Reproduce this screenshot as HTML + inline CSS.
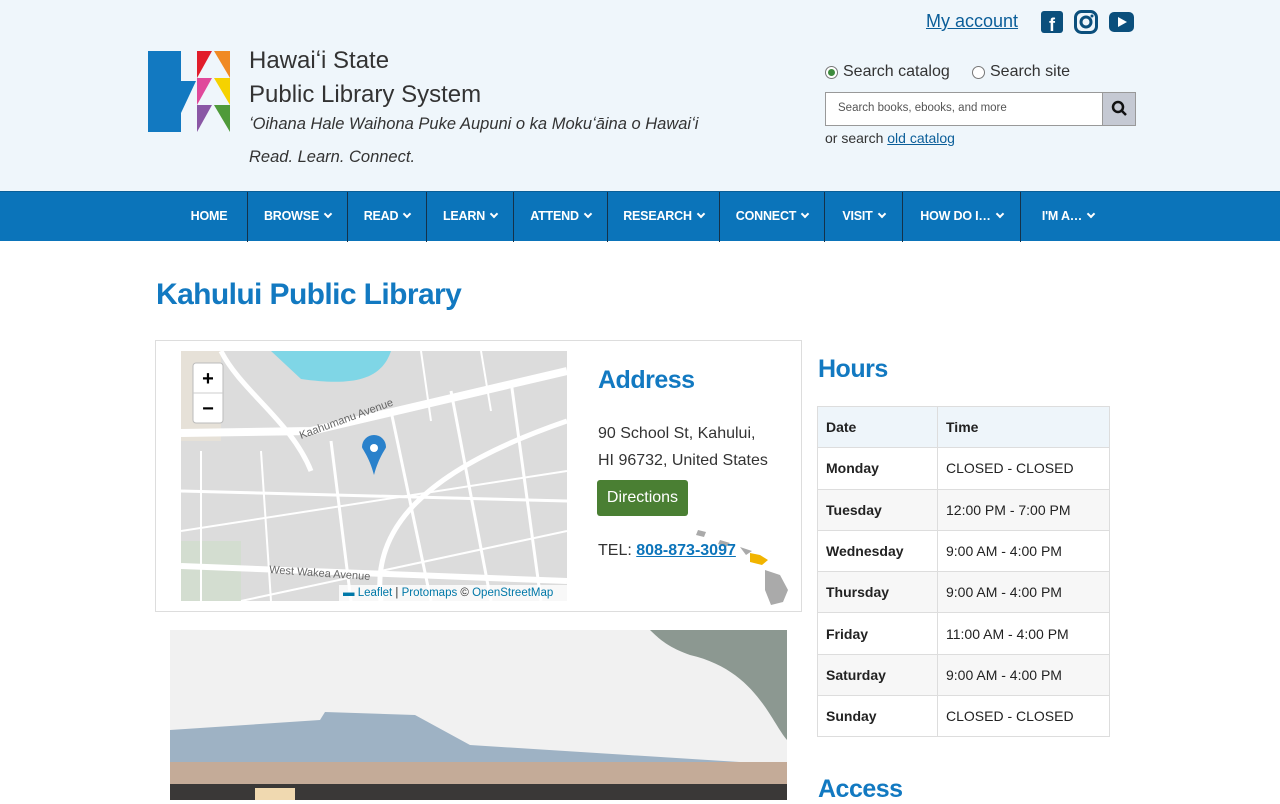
<!DOCTYPE html>
<html><head><meta charset="utf-8"><style>
*{box-sizing:border-box;margin:0;padding:0}
body{width:1280px;height:800px;overflow:hidden;background:#fff;font-family:"Liberation Sans",sans-serif;color:#222}
.hdr{position:absolute;left:0;top:0;width:1280px;height:191px;background:#eff6fb}
.nav{position:absolute;left:0;top:191px;width:1280px;height:50px;background:#0b74ba;border-top:1px solid #0a5f98}
.nav div{position:absolute;top:0;height:50px;line-height:48px;color:#fff;font-weight:bold;font-size:12.5px;text-align:center;border-left:1px solid #14324a;letter-spacing:-0.2px}
.nav div:first-child{border-left:none}
.chev{display:inline-block;width:6px;height:6px;border-right:2px solid #fff;border-bottom:2px solid #fff;transform:rotate(45deg);margin-left:6px;position:relative;top:-3px}
a{color:#0b5e99}
.t{position:absolute;white-space:nowrap}
table{border-collapse:collapse;position:absolute;left:817px;top:406px;width:293px;font-size:14px}
td{border:1px solid #ddd;height:41.3px;padding:0 8px}
td:first-child{width:120px;font-weight:bold}
tr:nth-child(odd){background:#f7f7f7}
tr:first-child{background:#eef5fa;font-weight:bold}
</style></head><body>
<div class="hdr">
<svg style="position:absolute;left:148px;top:51px" width="82" height="82" viewBox="0 0 82 82">
<polygon points="0,0 33,0 33,30 48,30 33,62 33,81 0,81" fill="#1279c1"/>
<polygon points="49,0 64,0 49,27" fill="#e11d2b"/>
<polygon points="66,0 82,0 82,27" fill="#f08a24"/>
<polygon points="49,27 64,27 49,54" fill="#e0499b"/>
<polygon points="66,27 82,27 82,54" fill="#f5d200"/>
<polygon points="49,54 64,54 49,81" fill="#8a57a5"/>
<polygon points="66,54 82,54 82,81" fill="#4f9a3a"/>
</svg>
<div class="t" style="left:249px;top:47px;font-size:24px;color:#333">Hawaiʻi State</div>
<div class="t" style="left:249px;top:81px;font-size:24px;color:#333">Public Library System</div>
<div class="t" style="left:249px;top:115px;font-size:16.5px;font-style:italic;color:#333">ʻOihana Hale Waihona Puke Aupuni o ka Mokuʻāina o Hawaiʻi</div>
<div class="t" style="left:249px;top:148px;font-size:16.5px;font-style:italic;color:#333">Read. Learn. Connect.</div>
<div class="t" style="left:926px;top:11px;font-size:18px"><a href="#">My account</a></div>
<svg style="position:absolute;left:1041px;top:11px" width="22" height="22"><rect width="22" height="22" rx="3" fill="#0b4f7c"/><text x="8" y="20" fill="#fff" font-size="18" font-weight="bold" font-family="Liberation Sans">f</text></svg>
<svg style="position:absolute;left:1074px;top:10px" width="24" height="24"><rect x="1.5" y="1.5" width="21" height="21" rx="6" fill="none" stroke="#0b4f7c" stroke-width="3"/><circle cx="12" cy="12" r="5" fill="none" stroke="#0b4f7c" stroke-width="3"/><circle cx="18" cy="6" r="1.5" fill="#0b4f7c"/></svg>
<svg style="position:absolute;left:1109px;top:12px" width="25" height="20"><rect width="25" height="20" rx="5" fill="#0b4f7c"/><polygon points="9,5 18,10 9,15" fill="#fff"/></svg>
<div class="t" style="left:825px;top:66px;width:13px;height:13px;border:1px solid #777;border-radius:50%;background:#fff"><div style="margin:2px;width:7px;height:7px;border-radius:50%;background:#3d8b3d"></div></div>
<div class="t" style="left:843px;top:63px;font-size:16px;color:#333">Search catalog</div>
<div class="t" style="left:972px;top:66px;width:13px;height:13px;border:1px solid #777;border-radius:50%;background:#fff"></div>
<div class="t" style="left:990px;top:63px;font-size:16px;color:#333">Search site</div>
<div class="t" style="left:825px;top:92px;width:311px;height:34px;border:1px solid #999;background:#fff"></div>
<div class="t" style="left:838px;top:102px;font-size:11.5px;color:#555">Search books, ebooks, and more</div>
<div class="t" style="left:1102px;top:93px;width:33px;height:32px;background:#c5c9d3;border-left:1px solid #999"><svg width="33" height="32"><circle cx="15" cy="14" r="5" fill="none" stroke="#111" stroke-width="2.5"/><line x1="19" y1="18" x2="23" y2="22" stroke="#111" stroke-width="2.5"/></svg></div>
<div class="t" style="left:825px;top:130px;font-size:14px;color:#333">or search <a href="#">old catalog</a></div>
</div>
<div class="nav">
<div style="left:171px;width:76px">HOME</div>
<div style="left:247px;width:100px">BROWSE<span class="chev"></span></div>
<div style="left:347px;width:79px">READ<span class="chev"></span></div>
<div style="left:426px;width:87px">LEARN<span class="chev"></span></div>
<div style="left:513px;width:94px">ATTEND<span class="chev"></span></div>
<div style="left:607px;width:112px">RESEARCH<span class="chev"></span></div>
<div style="left:719px;width:105px">CONNECT<span class="chev"></span></div>
<div style="left:824px;width:78px">VISIT<span class="chev"></span></div>
<div style="left:902px;width:118px">HOW DO I…<span class="chev"></span></div>
<div style="left:1020px;width:95px;border-right:none">I'M A…<span class="chev"></span></div>
</div>
<div class="t" style="left:156px;top:278px;font-size:30px;font-weight:bold;color:#1279c1;letter-spacing:-0.6px">Kahului Public Library</div>
<div class="t" style="left:155px;top:340px;width:647px;height:272px;border:1px solid #ddd"></div>
<svg style="position:absolute;left:181px;top:351px" width="386" height="250">
<rect width="386" height="250" fill="#dcdcdc"/>
<path d="M90,0 L210,0 C200,30 170,35 120,28 Z" fill="#7fd6e6"/>
<rect x="0" y="0" width="40" height="90" fill="#e6e1d8"/>
<rect x="0" y="190" width="60" height="60" fill="#d3ddd0"/>
<g stroke="#fff" fill="none">
<path d="M0,82 L130,80 L386,20" stroke-width="8"/>
<path d="M0,140 L386,150" stroke-width="3"/>
<path d="M40,0 C60,40 110,70 130,120" stroke-width="5"/>
<path d="M0,215 L386,230" stroke-width="6"/>
<path d="M200,250 C190,180 240,120 386,70" stroke-width="5"/>
<path d="M210,60 L250,250 M270,40 L310,250 M330,30 L360,250 M150,90 L170,250" stroke-width="3"/>
<path d="M0,180 L386,120 M60,250 L386,180" stroke-width="2"/>
<path d="M20,100 L20,250 M80,100 L90,250 M300,0 L310,60 M240,0 L250,70" stroke-width="2"/>
</g>
<text x="120" y="88" font-size="11" fill="#666" transform="rotate(-20 120 88)">Kaahumanu Avenue</text>
<text x="88" y="222" font-size="11" fill="#666" transform="rotate(4 88 222)">West Wakea Avenue</text>
<path d="M193,124 C188,105 181,98 181,96 A12,12 0 1 1 205,96 C205,98 198,105 193,124 Z" fill="#2a81cb"/>
<circle cx="193" cy="97" r="4" fill="#fff"/>
<rect x="12" y="12" width="30" height="60" rx="3" fill="#fff" stroke="#bbb"/>
<line x1="12" y1="42" x2="42" y2="42" stroke="#ccc"/>
<text x="27" y="34" font-size="20" text-anchor="middle" font-weight="bold" fill="#000">+</text>
<text x="27" y="64" font-size="20" text-anchor="middle" font-weight="bold" fill="#000">−</text>
<rect x="158" y="234" width="228" height="16" fill="#fff" opacity=".8"/>
<text x="162" y="245" font-size="11.5" fill="#0078a8">▬ Leaflet <tspan fill="#333">|</tspan> Protomaps <tspan fill="#333">©</tspan> OpenStreetMap</text>
</svg>
<div class="t" style="left:598px;top:366px;font-size:25px;font-weight:bold;color:#1279c1;letter-spacing:-0.5px">Address</div>
<div class="t" style="left:598px;top:420px;font-size:16px;line-height:27px;color:#333">90 School St, Kahului,<br>HI 96732, United States</div>
<div class="t" style="left:597px;top:480px;width:91px;height:36px;background:#4a7f33;border-radius:3px;color:#fff;font-size:16px;line-height:35px;text-align:center">Directions</div>
<svg style="position:absolute;left:680px;top:525px" width="115" height="80"><path d="M18,5 l8,2 -2,5 -8,-2z M40,15 l10,3 -4,4 -8,-3z M60,22 l12,4 -6,4z M85,45 l15,5 8,15 -5,12 -12,3 -6,-15z" fill="#aaa"/><path d="M70,28 l10,2 8,5 -6,5 -12,-3z" fill="#f1b400"/></svg>
<div class="t" style="left:598px;top:542px;font-size:16px;color:#333">TEL: <a href="#" style="font-weight:bold;color:#0b74ba">808-873-3097</a></div>
<svg style="position:absolute;left:170px;top:630px" width="617" height="170">
<rect width="617" height="170" fill="#f1f1f1"/>
<polygon points="0,100 150,90 155,82 245,85 300,115 617,135 617,170 0,170" fill="#9eb2c4"/>
<rect x="0" y="132" width="617" height="22" fill="#c4ab98"/>
<rect x="0" y="154" width="617" height="16" fill="#3a3837"/>
<rect x="85" y="158" width="40" height="12" fill="#f0d9b0"/>
<path d="M480,0 L617,0 L617,110 C600,90 585,40 520,25 C500,18 490,10 480,0Z" fill="#6a7a70" opacity=".75"/>
</svg>
<div class="t" style="left:818px;top:355px;font-size:25px;font-weight:bold;color:#1279c1;letter-spacing:-0.5px">Hours</div>
<table>
<tr><td>Date</td><td>Time</td></tr>
<tr><td>Monday</td><td>CLOSED - CLOSED</td></tr>
<tr><td>Tuesday</td><td>12:00 PM - 7:00 PM</td></tr>
<tr><td>Wednesday</td><td>9:00 AM - 4:00 PM</td></tr>
<tr><td>Thursday</td><td>9:00 AM - 4:00 PM</td></tr>
<tr><td>Friday</td><td>11:00 AM - 4:00 PM</td></tr>
<tr><td>Saturday</td><td>9:00 AM - 4:00 PM</td></tr>
<tr><td>Sunday</td><td>CLOSED - CLOSED</td></tr>
</table>
<div class="t" style="left:818px;top:775px;font-size:25px;font-weight:bold;color:#1279c1;letter-spacing:-0.5px">Access</div>
</body></html>
